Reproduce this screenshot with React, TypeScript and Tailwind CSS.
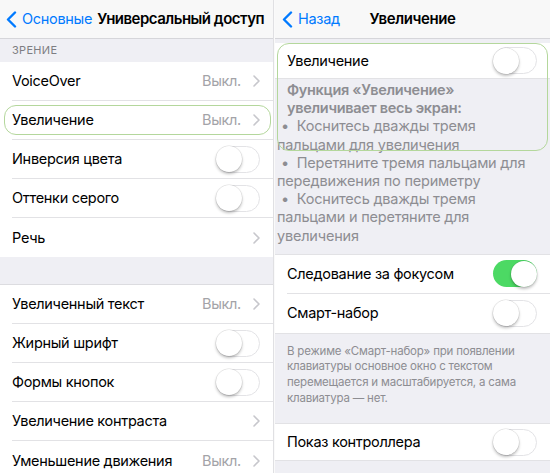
import React from "react";

const FONT = { fontFamily: "Inter, 'Noto Sans', 'Liberation Sans', sans-serif" };

function Chevron() {
  return (
    <svg width="7" height="12" viewBox="0 0 7 12" className="shrink-0">
      <path d="M1 1l5 5-5 5" fill="none" stroke="#c7c7cc" strokeWidth="1.6" strokeLinecap="round" strokeLinejoin="round" />
    </svg>
  );
}

function BackChevron() {
  return (
    <svg width="11" height="17" viewBox="0 0 11 17" className="shrink-0">
      <path d="M9 1.5L2 8.5l7 7" fill="none" stroke="#007aff" strokeWidth="2.4" strokeLinecap="round" strokeLinejoin="round" />
    </svg>
  );
}

function Toggle({ on = false }: { on?: boolean }) {
  return (
    <div
      className={
        "relative w-[44px] h-[27px] rounded-full shrink-0 " +
        (on ? "bg-[#4cd964]" : "bg-white border border-[#e3e3e6]")
      }
    >
      <div
        className={
          "absolute w-[26px] h-[26px] rounded-full bg-white shadow-[0_2px_3px_rgba(0,0,0,0.25),0_0_0_0.5px_rgba(0,0,0,0.12)] " +
          (on ? "right-[0.5px] top-[0.5px]" : "left-[-1px] top-[-0.5px]")
        }
      />
    </div>
  );
}

function Row({
  label,
  value,
  chevron,
  toggle,
  on,
  last,
  h = "h-[39px]",
}: {
  label: string;
  value?: string;
  chevron?: boolean;
  toggle?: boolean;
  on?: boolean;
  last?: boolean;
  h?: string;
}) {
  return (
    <div className={"bg-white pl-[12px] shrink-0 " + h}>
      <div
        className={
          "flex items-center h-full pr-[13px] " + (last ? "" : "border-b border-[#e2e2e5]")
        }
      >
        <span className="text-[14.5px] tracking-[-0.3px] text-black flex-1 whitespace-nowrap">{label}</span>
        {value && <span className="text-[14.5px] tracking-[-0.3px] text-[#a3a3a8] mr-[12px]">{value}</span>}
        {chevron && <Chevron />}
        {toggle && <Toggle on={on} />}
      </div>
    </div>
  );
}

export default function App() {
  return (
    <div className="w-[550px] h-[473px] overflow-hidden flex bg-[#f4f4f6]" style={FONT}>
      {/* Left panel */}
      <div className="relative w-[273px] h-full bg-[#efeff4] flex flex-col shrink-0 overflow-hidden">
        <div className="h-[39px] bg-[#f8f8f8] border-b border-[#d6d6da] flex items-center pl-[6px] shrink-0">
          <BackChevron />
          <span className="ml-[5px] text-[14.5px] text-[#007aff] tracking-[-0.3px]">Основные</span>
          <span className="ml-[5px] text-[15px] font-semibold text-black whitespace-nowrap tracking-[-0.5px]">
            Универсальный доступ
          </span>
        </div>
        <div className="h-[23px] flex items-center pl-[12px] shrink-0">
          <span className="text-[11px] text-[#7d7d82] tracking-[0.3px]">ЗРЕНИЕ</span>
        </div>
        <Row label="VoiceOver" value="Выкл." chevron />
        <Row label="Увеличение" value="Выкл." chevron />
        <Row label="Инверсия цвета" toggle />
        <Row label="Оттенки серого" toggle />
        <Row label="Речь" chevron last />
        <div className="h-[28px] border-b border-[#dcdce0] shrink-0" />
        <Row label="Увеличенный текст" value="Выкл." chevron />
        <Row label="Жирный шрифт" toggle />
        <Row label="Формы кнопок" toggle />
        <Row label="Увеличение контраста" chevron />
        <Row label="Уменьшение движения" value="Выкл." chevron last />
        <div className="absolute left-[4px] top-[105px] w-[267px] h-[30px] rounded-[12px] border-[1.5px] border-[#b4d79c] pointer-events-none" />
      </div>

      <div className="w-[2px] h-full bg-[#fafafa] border-l border-[#e0e0e3] shrink-0" />

      {/* Right panel */}
      <div className="relative flex-1 h-full bg-[#efeff4] flex flex-col overflow-hidden">
        <div className="relative h-[39px] bg-[#f8f8f8] border-b border-[#d6d6da] flex items-center pl-[7px] shrink-0">
          <BackChevron />
          <span className="ml-[5px] text-[14.5px] text-[#007aff] tracking-[-0.3px]">Назад</span>
          <span className="absolute left-0 right-0 text-center text-[15px] font-semibold text-black tracking-[-0.4px] pointer-events-none">
            Увеличение
          </span>
        </div>
        <div className="h-[4px] shrink-0" />
        <Row label="Увеличение" toggle last h="h-[35px]" />
        <div className="pt-[2px] pb-[9px] text-[14.5px] tracking-[-0.2px] leading-[18.2px] text-[#8d8d92] shrink-0 border-t border-[#e2e2e5]">
          <div className="pl-[12px] font-semibold tracking-[-0.3px]">Функция «Увеличение»</div>
          <div className="pl-[12px] font-semibold tracking-[-0.3px]">увеличивает весь экран:</div>
          <div className="pl-[2px]">
            <div className="pl-[4px]">•&nbsp; Коснитесь дважды тремя</div>
            <div>пальцами для увеличения</div>
            <div className="pl-[4px]">•&nbsp; Перетяните тремя пальцами для</div>
            <div>передвижения по периметру</div>
            <div className="pl-[4px]">•&nbsp; Коснитесь дважды тремя</div>
            <div>пальцами и перетяните для</div>
            <div>увеличения</div>
          </div>
        </div>
        <div className="border-t border-[#e2e2e5] shrink-0" />
        <Row label="Следование за фокусом" toggle on />
        <Row label="Смарт-набор" toggle last />
        <div className="border-t border-[#e2e2e5] pt-[10px] pb-[17px] pl-[12px] pr-[8px] text-[11.5px] tracking-[-0.2px] leading-[15.6px] text-[#8d8d92] shrink-0">
          <div>В режиме «Смарт-набор» при появлении</div>
          <div>клавиатуры основное окно с текстом</div>
          <div>перемещается и масштабируется, а сама</div>
          <div>клавиатура — нет.</div>
        </div>
        <div className="border-t border-[#e2e2e5] shrink-0" />
        <Row label="Показ контроллера" toggle last h="h-[36px]" />
        <div className="border-t border-[#e2e2e5] shrink-0" />
        <div className="absolute left-[2px] top-[43px] w-[271px] h-[108px] rounded-[12px] border-[1.5px] border-[#b4d79c] pointer-events-none" />
      </div>
    </div>
  );
}
